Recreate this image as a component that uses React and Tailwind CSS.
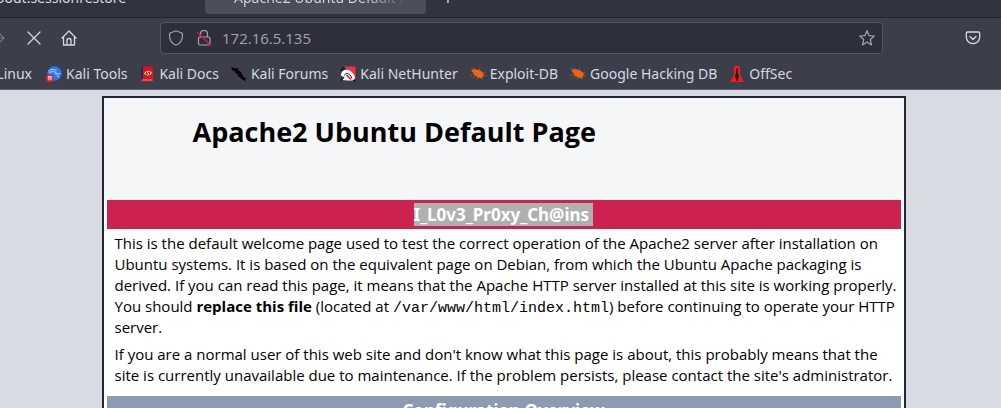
function Bug() {
  return (
    <svg viewBox="0 0 16 16" className="size-4 shrink-0" aria-hidden="true">
      <path d="M3 4L.500 2.800M5.500 4L3 1.500M9 4.500L10 2M3 8.500L.500 9.500M5.500 10L3 12.500M8 11l-1 2.500M11 11.500l1.500 2M13 7l2.500-1M13.500 9.500l2.500.500" stroke="#a8532c" strokeWidth="0.900" fill="none" />
      <path d="M1.500 5C2.500 3 5 2.800 8 3.800l3 1.200 2 1.800.8 2L13 10.500l-1 1.800-2.500-.3-3-1.500L4 9 3.500 7.200z" fill="#ef6414" />
    </svg>
  );
}

function Dragon() {
  return (
    <svg viewBox="0 0 16 16" className="size-4 shrink-0" aria-hidden="true">
      <circle cx="8.500" cy="7.500" r="7.200" fill="#2779ee" />
      <path d="M2.500 5.200c3-2.200 6-2 8-.500M3 7c3-2 6-1.500 7.500 0 1.200 1 2.700 1 4 .500M9 7.500c2 .8 3 2 3.500 4" stroke="#c3dafa" strokeWidth="1" fill="none" />
      <circle cx="3.800" cy="12.200" r="3.800" fill="#e8232d" />
      <path d="M2.900 10.800v3.400M5 10.800v3.400M1.800 10.800h4" stroke="#fff" strokeWidth="0.900" />
    </svg>
  );
}

function Docs() {
  return (
    <svg viewBox="0 0 16 16" className="size-4 shrink-0" aria-hidden="true">
      <path d="M2 .500h12v15H2z" fill="#dc1414" />
      <path d="M2 .500h2v13H2z" fill="#1d2a66" />
      <path d="M3 13.500h10.500v1H3z" fill="#9aa3ad" />
      <path d="M7.500 5.500L5.500 7l2 2M10.500 5l2 2.200-2 1.800M9.800 5L8 6.300l2 1.700-1.700 1.500" stroke="#fff" strokeWidth="1" fill="none" />
    </svg>
  );
}

function Forums() {
  return (
    <svg viewBox="0 0 16 16" className="size-4 shrink-0" aria-hidden="true">
      <path d="M0 .500l3.500 1.800L7 2.300l.500 2L10 6l1.200 3 2.300 2.800 2.500 1-2 .400.600 2.300-2.600-1.500L9 11.500 6.500 9.800 7 8.200 4 7l.5-1.500L1.500 4.500z" fill="#050505" />
    </svg>
  );
}

function NetHunter() {
  return (
    <svg viewBox="0 0 16 16" className="size-4 shrink-0" aria-hidden="true">
      <path d="M4.500.500h11v13z" fill="#f5303b" />
      <path d="M.500 4.500L4 1.500M1 14.500l4-3.500M12 12l3 3.500" stroke="#101010" strokeWidth="1.200" />
      <path d="M7.500 14.500l-5-.500 2-2.500L1 9.500C1 4.500 6 2 10.500 5c2.500 1.800 4.500 4.500 4.500 7.500l-2.500 2z" fill="#fff" />
      <path d="M4.500 9.500c.8-3.500 5.500-2.500 7.500 3" stroke="#181818" strokeWidth="1" fill="none" />
      <path d="M6.500 9l4.500 4.500" stroke="#e11b2c" strokeWidth="1.600" />
    </svg>
  );
}

function OffSec() {
  return (
    <svg viewBox="0 0 16 16" className="size-4 shrink-0" aria-hidden="true">
      <path d="M5 0h6v8.500l3.500 6.500v1h-13v-1L5 8.500z" fill="#e91d22" />
      <path d="M7 2.500h2v5l1 3-1 2v2H7v-2l-1-2 1-3z" fill="#350608" />
    </svg>
  );
}

const bookmarks = [
  ["Kali Tools", Dragon],
  ["Kali Docs", Docs],
  ["Kali Forums", Forums],
  ["Kali NetHunter", NetHunter],
  ["Exploit-DB", Bug],
  ["Google Hacking DB", Bug],
  ["OffSec", OffSec],
];

function Tabs() {
  return (
    <div className="flex h-[18px] items-end overflow-hidden border-b border-[#22262e] bg-[#2f343f] text-sm leading-5 text-[#d3dae3]">
      <button className="mb-[3px] -ml-3 h-8 w-[217px] shrink-0 text-left whitespace-nowrap">about:sessionrestore</button>
      <button className="mb-[3px] h-8 w-[221px] shrink-0 overflow-hidden rounded-sm bg-[#4b4f59] pl-[29px] text-left whitespace-nowrap">
        <span className="bg-linear-to-r from-[#d3dae3] from-75% to-[#4b4f59] bg-clip-text text-transparent">Apache2 Ubuntu Default P</span>
      </button>
      <button className="mb-[3px] h-8 w-11 text-lg" aria-label="New tab">+</button>
    </div>
  );
}

function Toolbar() {
  return (
    <div className="flex h-10 items-center text-[#d3dae3]">
      <button aria-label="Forward" className="-ml-[11px] text-[#777b84]">
        <svg viewBox="0 0 16 16" className="size-4" fill="none" stroke="currentColor" strokeWidth="1.200"><path d="M1 8h14M9.500 2.500L15 8l-5.500 5.500" /></svg>
      </button>
      <button aria-label="Stop" className="ml-[21px]">
        <svg viewBox="0 0 16 16" className="size-4" fill="none" stroke="currentColor" strokeWidth="1.200" strokeLinecap="round"><path d="M2 2l12 12M14 2L2 14" /></svg>
      </button>
      <button aria-label="Home" className="ml-[19px]">
        <svg viewBox="0 0 16 16" className="size-4" fill="none" stroke="currentColor" strokeWidth="1.300" strokeLinecap="round" strokeLinejoin="round"><path d="M1 8l7-7 7 7M2.500 7v8h11V7M6 15v-4.500a2 2 0 0 1 4 0V15" /></svg>
      </button>
      <div className="ml-[83px] flex h-8 min-w-0 flex-1 items-center rounded-sm border border-[#4d566b] bg-[#2d303b] px-[7px] text-[#a1a4aa]">
        <svg viewBox="0 0 16 16" className="size-4 shrink-0" fill="none" stroke="currentColor" strokeWidth="1.200" strokeLinejoin="round"><path d="M8 .800l6.400 2.400v3c0 4-2 7-6.400 9-4.400-2-6.400-5-6.400-9v-3z" /></svg>
        <svg viewBox="0 0 16 16" className="ml-3 size-4 shrink-0" fill="none" stroke="currentColor" strokeWidth="1.200"><rect x="2.500" y="7" width="11.500" height="8" rx="1.500" /><path d="M4.500 7V4a3.500 3.500 0 0 1 7 0v3" /><path d="M1 2l14 13.500" stroke="#e5153f" strokeWidth="1.400" /></svg>
        <input aria-label="Address" defaultValue="172.16.5.135" className="ml-[10px] min-w-0 flex-1 bg-transparent font-['Open_Sans',sans-serif] text-[15px] outline-none" />
        <button aria-label="Bookmark this page">
          <svg viewBox="0 0 16 16" className="size-4" fill="none" stroke="currentColor" strokeWidth="1.200" strokeLinejoin="round"><path d="M8 .700l2 4.900 5.300.400-4 3.500 1.200 5.400L8 12l-4.500 2.900 1.200-5.400-4-3.500 5.300-.400z" /></svg>
        </button>
      </div>
      <button aria-label="Save to Pocket" className="mr-5 ml-[82px]">
        <svg viewBox="0 0 16 16" className="size-4" fill="none" stroke="currentColor" strokeWidth="1.300" strokeLinecap="round" strokeLinejoin="round"><path d="M2.500 2h11a1.200 1.200 0 0 1 1.200 1.200V7a6.700 6.700 0 0 1-13.400 0V3.200A1.200 1.200 0 0 1 2.500 2zM5 6.500l3 3 3-3" /></svg>
      </button>
    </div>
  );
}

function Bookmarks() {
  return (
    <nav aria-label="Bookmarks" className="flex h-[31px] items-center gap-3 overflow-hidden text-sm whitespace-nowrap text-[#d3dae3]">
      <a href="#linux" className="-ml-8 w-[66px] shrink-0 pr-0.5 text-right">Kali Linux</a>
      {bookmarks.map(([name, Icon]) => (
        <a key={name} href="#bookmark" className="flex shrink-0 items-center gap-1">
          <Icon />
          {name}
        </a>
      ))}
    </nav>
  );
}

export default function App() {
  return (
    <div className="flex h-screen flex-col overflow-hidden bg-[#d8dbe2] font-['Noto_Sans',sans-serif]">
      <header className="shrink-0 border-b border-[#59617a] bg-[#3c3f49]">
        <Tabs />
        <Toolbar />
        <Bookmarks />
      </header>
      <div className="shrink-0 pt-1.5 pl-[6px]">
        <main className="mx-auto w-full max-w-[804px] border-2 border-[#212738] bg-white font-['Open_Sans','Noto_Sans',sans-serif] text-[15px] leading-[21px] text-black">
          <div className="h-[102px] bg-[#f5f6f7] pt-4 pl-[89px]">
            <h1 className="text-[27px] leading-9 font-bold">Apache2 Ubuntu Default Page</h1>
          </div>
          <div className="px-[3px]">
            <h2 className="bg-[#cd214f] py-1 text-center font-['Noto_Sans',sans-serif] text-[17px] leading-[21px] font-bold text-white">
              <mark className="bg-[#b0b0b0] whitespace-pre text-white">I_L0v3_Pr0xy_Ch@ins </mark>
            </h2>
            <div className="flex flex-col gap-1.5 pt-1 pb-[10px] pl-2">
              <p>
                This is the default welcome page used to test the correct operation of the Apache2 server after installation on Ubuntu systems. It is based on the equivalent page on Debian, from which the Ubuntu Apache packaging is derived. If you can read this page, it means that the Apache HTTP server installed at this site is working properly. You should <b>replace this file</b> (located at <code className="font-['Liberation_Mono',monospace] text-[15px] leading-none">/var/www/html/index.html</code>) before continuing to operate your HTTP server.
              </p>
              <p>
                If you are a normal user of this web site and don't know what this page is about, this probably means that the site is currently unavailable due to maintenance. If the problem persists, please contact the site's administrator.
              </p>
            </div>
            <h2 className="bg-[#8d9bb2] py-1 text-center font-['Noto_Sans',sans-serif] text-[17px] leading-[21px] font-bold text-white">Configuration Overview</h2>
          </div>
        </main>
      </div>
    </div>
  );
}
